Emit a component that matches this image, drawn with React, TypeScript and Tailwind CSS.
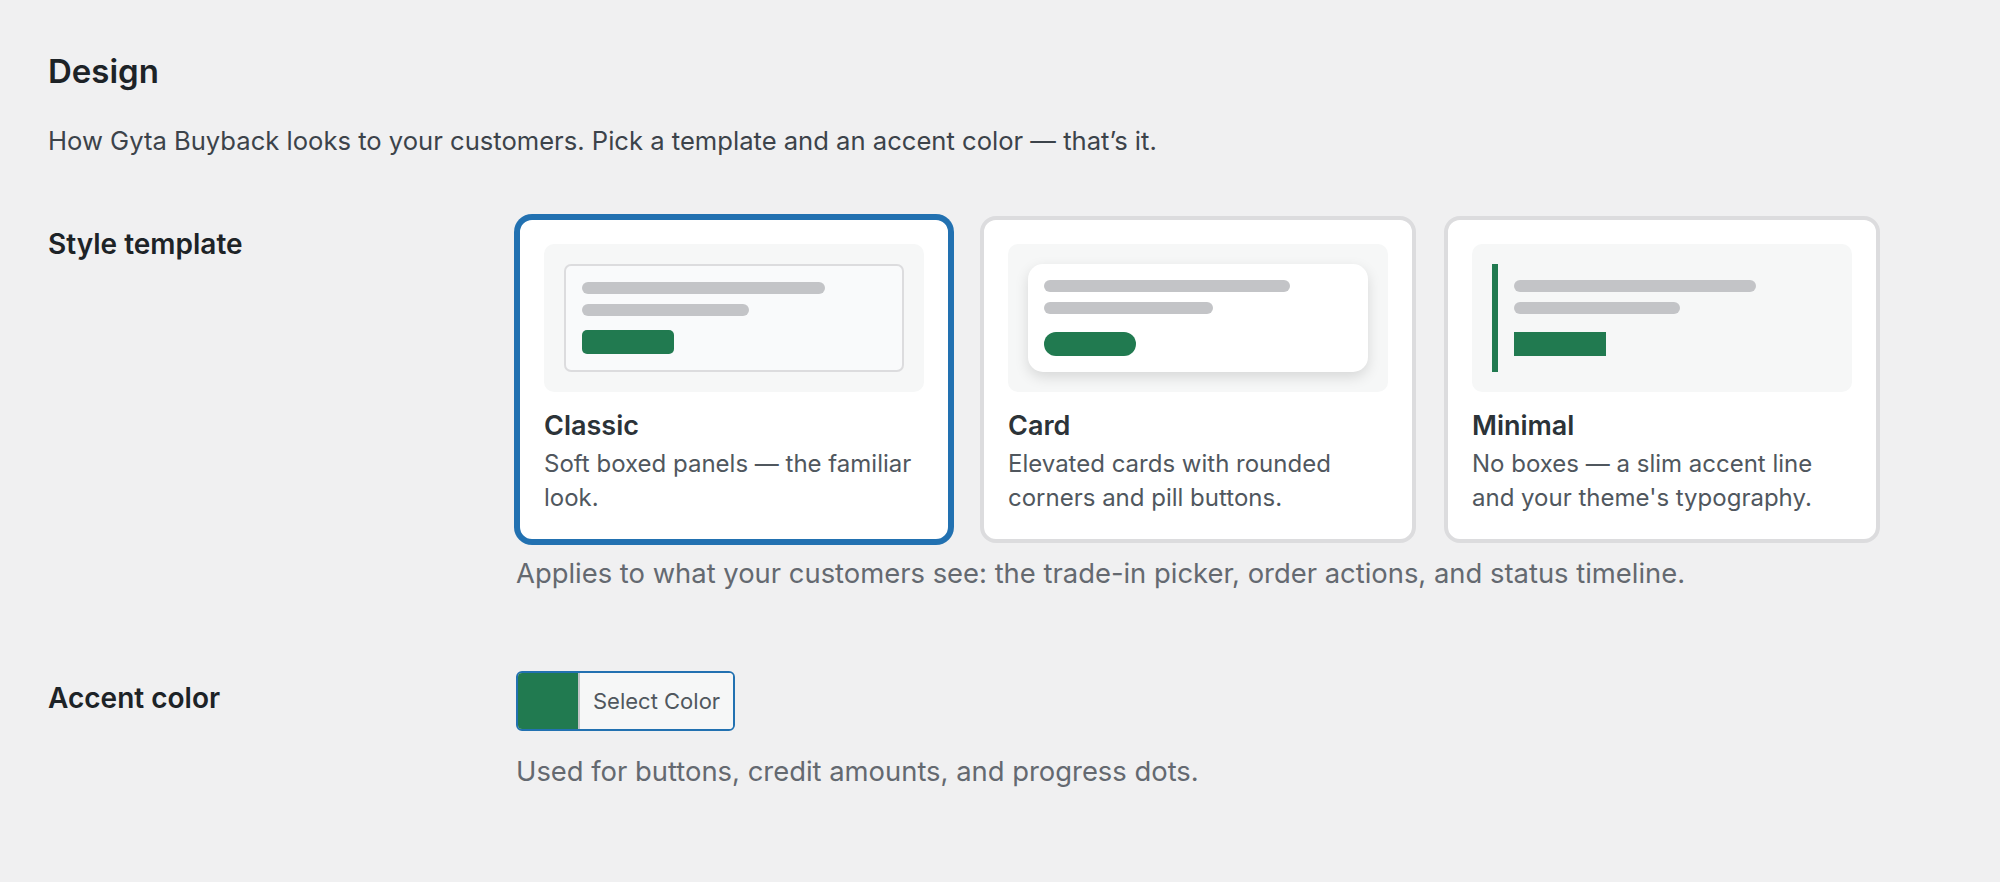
const green = "bg-[#217a50]";

function Lines() {
  return (
    <>
      <div className="h-3 w-[80%] rounded-full bg-[#c3c4c7]" />
      <div className="mt-[10px] h-3 w-[55%] rounded-full bg-[#c3c4c7]" />
    </>
  );
}

function ClassicPreview() {
  return (
    <div className="h-[108px] rounded-[7px] border-2 border-[#dcdcde] bg-[#f9fafb] px-4 pt-4">
      <Lines />
      <div className={`mt-[14px] h-6 w-[92px] rounded-[5px] ${green}`} />
    </div>
  );
}

function CardPreview() {
  return (
    <div className="h-[108px] rounded-[15px] bg-white p-4 shadow-[0_5px_14px_rgba(0,0,0,0.13)]">
      <Lines />
      <div className={`mt-[18px] h-6 w-[92px] rounded-full ${green}`} />
    </div>
  );
}

function MinimalPreview() {
  return (
    <div className="h-[108px] border-l-[6px] border-[#217a50] p-4">
      <Lines />
      <div className={`mt-[18px] h-6 w-[92px] ${green}`} />
    </div>
  );
}

const templates = [
  { name: "Classic", desc: "Soft boxed panels — the familiar look.", preview: <ClassicPreview />, selected: true },
  { name: "Card", desc: "Elevated cards with rounded corners and pill buttons.", preview: <CardPreview />, selected: false },
  { name: "Minimal", desc: "No boxes — a slim accent line and your theme's typography.", preview: <MinimalPreview />, selected: false },
];

export default function App() {
  return (
    <div className="min-h-screen bg-[#f0f0f1] pl-12 pt-[51px] font-['Inter',sans-serif]">
      <h2 className="text-[33px] leading-[40px] font-semibold text-[#1d2327]">Design</h2>
      <p className="mt-8 text-[25.6px] leading-[36px] text-[#3c434a]">
        How Gyta Buyback looks to your customers. Pick a template and an accent color — that’s it.
      </p>

      <div className="mt-[57px] grid grid-cols-[468px_1fr]">
        {/* style template row */}
        <div className="pt-[10px] text-[28px] leading-[36px] font-semibold text-[#1d2327]">Style template</div>
        <div>
          <div className="grid w-[1364px] grid-cols-3 gap-7">
            {templates.map((t) => (
              <div
                key={t.name}
                className={
                  t.selected
                    ? "rounded-2xl border-4 border-[#2271b1] bg-white p-6 shadow-[0_0_0_2px_#2271b1]"
                    : "rounded-2xl border-4 border-[#dcdcde] bg-white p-6"
                }
              >
                <div className="h-[148px] rounded-[10px] bg-[#f6f7f7] p-5">{t.preview}</div>
                <div className="mt-4 text-[27px] leading-[36px] font-semibold text-[#2c3338]">{t.name}</div>
                <p className="mt-[3px] w-[372px] text-[24px] leading-[34px] text-[#50575e]">{t.desc}</p>
              </div>
            ))}
          </div>
          <p className="mt-3 text-[27.4px] leading-[36px] text-[#646970]">
            Applies to what your customers see: the trade-in picker, order actions, and status timeline.
          </p>
        </div>

        {/* accent color row */}
        <div className="mt-[80px] pt-[9px] text-[28px] leading-[36px] font-semibold text-[#1d2327]">Accent color</div>
        <div className="mt-[80px]">
          <button className="flex h-[60px] w-[219px] overflow-hidden rounded-[6px] border-2 border-[#2271b1] text-left">
            <span className={`w-[60px] shrink-0 ${green}`} />
            <span className="flex flex-1 items-center border-l-2 border-[#c3c4c7] bg-[#f6f7f7] pl-[13px] text-[22px] text-[#50575e]">
              Select Color
            </span>
          </button>
          <p className="mt-[22px] text-[27.4px] leading-[36px] text-[#646970]">
            Used for buttons, credit amounts, and progress dots.
          </p>
        </div>
      </div>
    </div>
  );
}
